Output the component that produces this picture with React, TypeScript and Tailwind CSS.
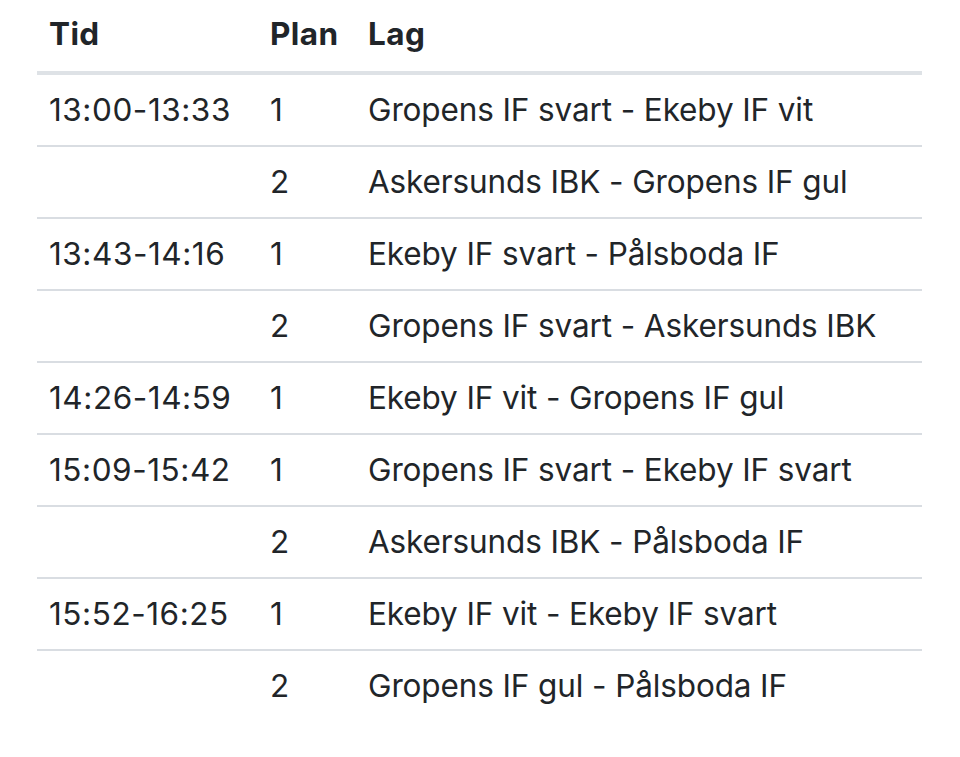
import React from "react";

const rows: [string, string, string][] = [
  ["13:00-13:33", "1", "Gropens IF svart - Ekeby IF vit"],
  ["", "2", "Askersunds IBK - Gropens IF gul"],
  ["13:43-14:16", "1", "Ekeby IF svart - Pålsboda IF"],
  ["", "2", "Gropens IF svart - Askersunds IBK"],
  ["14:26-14:59", "1", "Ekeby IF vit - Gropens IF gul"],
  ["15:09-15:42", "1", "Gropens IF svart - Ekeby IF svart"],
  ["", "2", "Askersunds IBK - Pålsboda IF"],
  ["15:52-16:25", "1", "Ekeby IF vit - Ekeby IF svart"],
  ["", "2", "Gropens IF gul - Pålsboda IF"],
];

export default function App() {
  return (
    <div
      className="w-[960px] h-[757px] bg-white text-[#212529] pl-[37px] text-[31.5px] leading-none"
      style={{ fontFamily: "Inter, 'Noto Sans', sans-serif" }}
    >
      <div className="w-[885px]">
        <div className="grid grid-cols-[221px_98px_1fr] h-[75px] pb-[3px] items-center border-b-[4px] border-[#dee2e6] font-bold tracking-[0.4px]">
          <div className="pl-[12px]">Tid</div>
          <div className="pl-[12px]">Plan</div>
          <div className="pl-[12px]">Lag</div>
        </div>
        {rows.map((r, i) => (
          <div
            key={i}
            className={
              "grid grid-cols-[221px_98px_1fr] items-center " +
              (i === rows.length - 1
                ? "h-[70px]"
                : "h-[72px] border-b-[2px] border-[#d9dde2]")
            }
          >
            <div className="pl-[12px] tracking-[0.55px]">{r[0]}</div>
            <div className="pl-[12px]">{r[1]}</div>
            <div className="pl-[12px] tracking-[-0.12px]">{r[2]}</div>
          </div>
        ))}
      </div>
    </div>
  );
}
